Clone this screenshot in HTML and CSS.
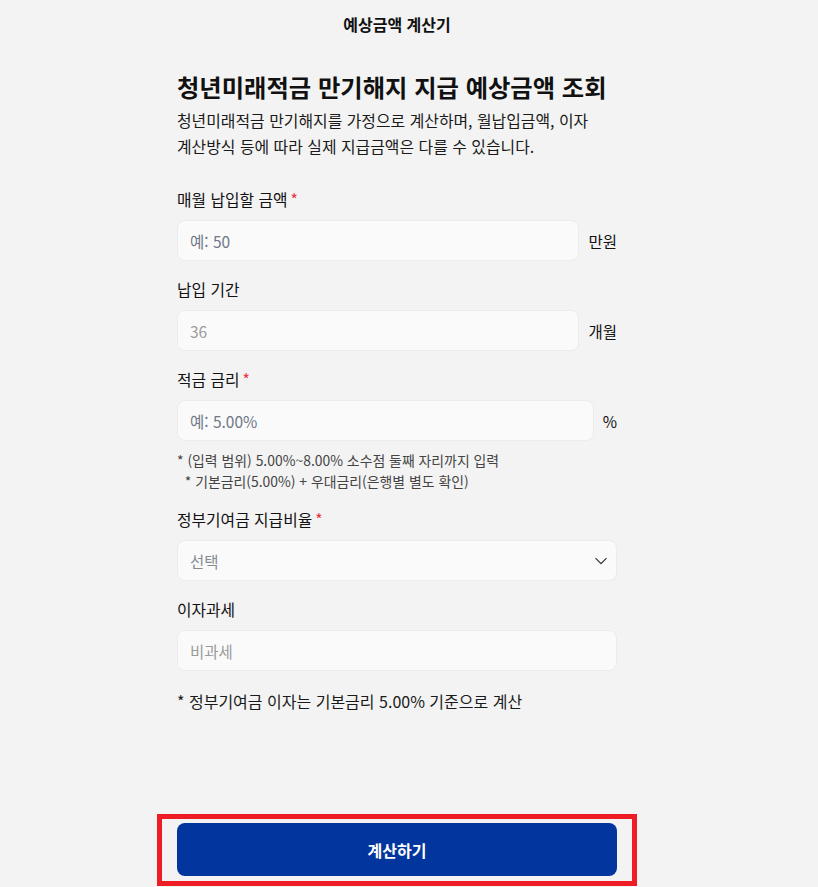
FILE: index.html
```html
<!DOCTYPE html>
<html lang="ko">
<head>
<meta charset="utf-8">
<title>예상금액 계산기</title>
<link rel="stylesheet" href="styles.css">
</head>
<body>
<div class="app">
  <header class="topbar">예상금액 계산기</header>
  <main class="content">
    <h1 class="title">청년미래적금 만기해지 지급 예상금액 조회</h1>
    <p class="desc">청년미래적금 만기해지를 가정으로 계산하며, 월납입금액, 이자<br>계산방식 등에 따라 실제 지급금액은 다를 수 있습니다.</p>

    <div class="field">
      <label class="label">매월 납입할 금액<span class="req">*</span></label>
      <div class="row">
        <div class="box"><span class="ph">예: 50</span></div>
        <span class="unit">만원</span>
      </div>
    </div>

    <div class="field">
      <label class="label">납입 기간</label>
      <div class="row">
        <div class="box"><span class="val-dim">36</span></div>
        <span class="unit">개월</span>
      </div>
    </div>

    <div class="field">
      <label class="label">적금 금리<span class="req">*</span></label>
      <div class="row">
        <div class="box"><span class="ph">예: 5.00%</span></div>
        <span class="unit">%</span>
      </div>
      <p class="help">* (입력 범위) 5.00%~8.00% 소수점 둘째 자리까지 입력<br>&nbsp;&nbsp;* 기본금리(5.00%) + 우대금리(은행별 별도 확인)</p>
    </div>

    <div class="field">
      <label class="label">정부기여금 지급비율<span class="req">*</span></label>
      <div class="box select">
        <span class="ph-sel">선택</span>
        <svg class="chev" width="14" height="8" viewBox="0 0 14 8"><path d="M1.5 1.2l5.5 5.5 5.5-5.5" fill="none" stroke="#333" stroke-width="1.2"/></svg>
      </div>
    </div>

    <div class="field">
      <label class="label">이자과세</label>
      <div class="box"><span class="val-dim">비과세</span></div>
    </div>

    <p class="note">* 정부기여금 이자는 기본금리 5.00% 기준으로 계산</p>
  </main>
  <footer class="footer">
    <button class="cta" type="button">계산하기</button>
  </footer>
</div>
</body>
</html>
```
FILE: styles.css
```css
html, body {
  margin: 0;
  padding: 0;
  background: #f3f3f3;
}
body {
  font-family: "Noto Sans CJK KR", "Noto Sans", sans-serif;
  color: #111;
}
.app {
  width: 794px;
  min-height: 887px;
  display: flex;
  flex-direction: column;
}
.topbar {
  height: 48px;
  line-height: 48px;
  text-align: center;
  font-size: 16px;
  font-weight: 700;
}
.content {
  width: 440px;
  margin: 0 auto;
  flex: 1;
}
.title {
  margin: 23px 0 0;
  font-size: 24.3px;
  line-height: 32px;
  font-weight: 700;
  letter-spacing: 0;
}
.desc {
  margin: 5px 0 0;
  font-size: 15.9px;
  line-height: 26px;
  color: #1a1a1a;
}
.field {
  margin-top: 29px;
}
.field + .field {
  margin-top: 18px;
}
.label {
  display: block;
  font-size: 15.8px;
  line-height: 22px;
  margin-bottom: 9px;
  color: #111;
}
.req {
  color: #e8323c;
  margin-left: 3px;
}
.row {
  display: flex;
  align-items: center;
  gap: 9px;
}
.box {
  flex: 1;
  height: 41px;
  box-sizing: border-box;
  border: 1px solid #ececec;
  border-radius: 8px;
  background: #fafafa;
  display: flex;
  align-items: center;
  padding: 0 12px;
  font-size: 15.5px;
}
.ph { color: #6f7887; }
.val-dim { color: #9a9a9a; }
.ph-sel { color: #858a93; }
.unit {
  font-size: 15.5px;
  color: #111;
  min-width: 14px;
}
.select {
  justify-content: space-between;
  padding-right: 8px;
}
.chev { display: block; }
.help {
  margin: 9px 0 0;
  font-size: 13.9px;
  line-height: 20.5px;
  color: #444;
}
.note {
  margin: 19px 0 0;
  font-size: 16px;
  line-height: 22px;
  color: #1a1a1a;
}
.footer {
  width: 440px;
  margin: 0 auto;
  padding-bottom: 11px;
  position: relative;
}
.footer::after {
  content: "";
  position: absolute;
  top: -9px;
  bottom: 1px;
  left: -20px;
  right: -20px;
  border: 5px solid #ee1c25;
  pointer-events: none;
}
.cta {
  display: block;
  width: 100%;
  height: 53px;
  border: 0;
  border-radius: 8px;
  background: #02369e;
  color: #fff;
  font-family: inherit;
  font-size: 16px;
  font-weight: 700;
  cursor: pointer;
}
```
